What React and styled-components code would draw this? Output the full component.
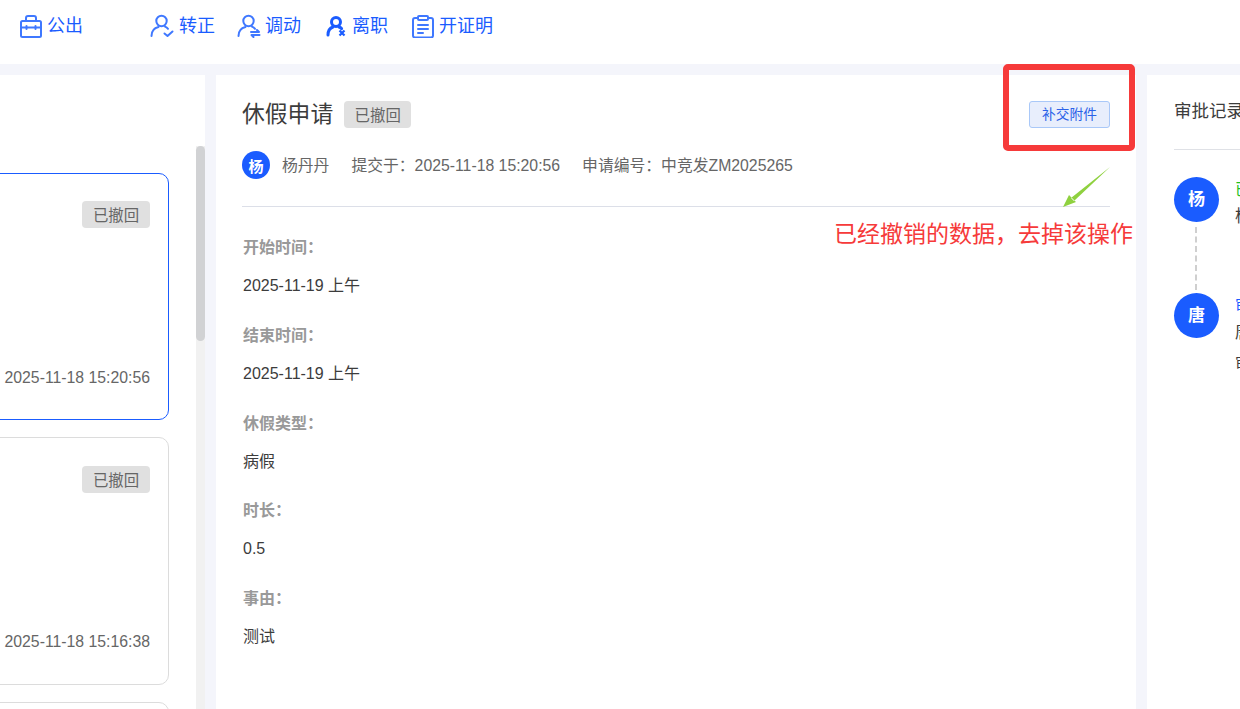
import React from "react";
import styled, { createGlobalStyle } from "styled-components";

const Global = createGlobalStyle`
  html, body { margin: 0; padding: 0; background: #f4f5fb; }
  * { box-sizing: border-box; }
  body { font-family: "Liberation Sans", "Noto Sans CJK SC", sans-serif; }
`;
const Page = styled.div`
  position: relative; width: 1240px; height: 709px; overflow: hidden;
  display: flex; flex-direction: column; background: #f4f5fb;
`;
const Toolbar = styled.div`
  height: 64px; flex: none; background: #fff; display: flex; align-items: flex-start;
  padding: 13px 0 0 20px;
`;
const Tool = styled.div`
  display: flex; align-items: center; height: 26px; gap: ${p => p.$gap}px;
  margin-right: ${p => p.$after}px;
  color: #1a5cff; font-size: 18px; line-height: 26px; white-space: nowrap;
`;
const Columns = styled.div`
  flex: 1; min-height: 0; margin-top: 11px; display: flex; gap: 11px;
`;
const ListPanel = styled.div`
  width: 205px; flex: none; background: #fff; padding-top: 71px; overflow: hidden;
`;
const ListScroll = styled.div`
  height: 100%; display: flex; justify-content: space-between;
`;
const Cards = styled.div`
  width: 169px; flex: none; padding-top: 27px; display: flex; flex-direction: column; gap: 17px;
`;
const Card = styled.div`
  margin-left: -40px; width: 209px; height: ${p => p.$h}px; flex: none; border-radius: 10px;
  border: 1px solid ${p => (p.$active ? "#1a5cff" : "#dcdcdc")}; padding: ${p => p.$pad ?? 27}px 18px 0 0;
  display: flex; flex-direction: column; align-items: flex-end; background: #fff;
`;
const Badge = styled.span`
  display: inline-flex; align-items: center; justify-content: center; width: ${p => p.$w}px; height: 27px;
  padding-bottom: 2px; border-radius: 4px; background: #e0e0e0; color: #666; font-size: 15.4px; flex: none;
`;
const CardDate = styled.div`
  margin-top: ${p => p.$top}px; color: #666; font-size: 15.8px; line-height: 20px; white-space: nowrap;
`;
const Track = styled.div`
  width: 9px; flex: none; background: #f1f1f1;
`;
const Thumb = styled.div`
  height: 195px; background: #d1d2d4; border-radius: 5px;
`;
const Detail = styled.div`
  width: 920px; flex: none; background: #fff; padding: 26px 26px 0;
`;
const TitleRow = styled.div`
  display: flex; align-items: center; height: 27px;
`;
const Title = styled.h1`
  margin: 0 11px 0 0; font-size: 22.8px; font-weight: 400; color: #3c3c3c; line-height: 27px; white-space: nowrap;
`;
const AttachButton = styled.button`
  margin-left: auto; width: 81px; height: 27px; padding: 0 0 3px; border-radius: 3px;
  border: 1px solid #a9c8f8; background: #e8eefc; color: #2b62e8; font: 13.7px "Liberation Sans", "Noto Sans CJK SC", sans-serif;
`;
const MetaRow = styled.div`
  margin-top: 23px; display: flex; align-items: center; height: 28px; color: #666; font-size: 15.8px; white-space: nowrap;
`;
const Avatar = styled.div`
  width: ${p => p.$size}px; height: ${p => p.$size}px; flex: none; border-radius: 50%; background: #1a5cff;
  color: #fff; display: flex; align-items: center; justify-content: center; font-weight: 700;
  font-size: ${p => p.$font}px; padding-bottom: ${p => p.$lift ?? 0}px;
`;
const MetaText = styled.span`
  margin-left: ${p => p.$left}px; padding-bottom: 2px;
`;
const Divider = styled.div`
  height: 1px; background: #dcdfe8; margin-top: 27px; margin-bottom: 27px;
`;
const Field = styled.div`
  padding-left: 1px; height: 87.8px;
`;
const FieldLabel = styled.div`
  font-size: 16px; font-weight: 700; color: #999; line-height: 28px;
`;
const FieldValue = styled.div`
  margin-top: 10px; font-size: 16px; color: #3c3c3c; line-height: 28px;
`;
const Records = styled.div`
  flex: 1; min-width: 0; background: #fff; padding: 24px 0 0 27px; overflow: hidden;
`;
const RecordsTitle = styled.div`
  font-size: 17.5px; color: #3c3c3c; line-height: 24px; white-space: nowrap; padding-bottom: 26px;
  width: 200px; border-bottom: 1px solid #dfe1e6;
`;
const Timeline = styled.div`
  padding-top: 27px; display: flex; flex-direction: column; width: 240px;
`;
const Step = styled.div`
  display: flex; gap: 16px; height: ${p => p.$h}px;
`;
const Rail = styled.div`
  display: flex; flex-direction: column; align-items: center; width: 45px; flex: none;
`;
const Dash = styled.div`
  margin-top: 5px; height: 63px; margin-right: 2px; border-left: 2px dashed #cfcfcf;
`;
const StepText = styled.div`
  white-space: nowrap; padding-top: 3px;
`;
const StepStatus = styled.div`
  color: ${p => p.$color}; font-size: 15.4px; line-height: 20px;
`;
const StepName = styled.div`
  color: #3c3c3c; font-size: 17px; line-height: 24px; margin-top: 5px;
`;
const StepNote = styled.div`
  color: #3c3c3c; font-size: 15.4px; line-height: 20px; margin-top: 9px;
`;
const RedBox = styled.div`
  position: absolute; left: 1003px; top: 64px; width: 132px; height: 87px;
  border: 6px solid #f63a3a; border-radius: 5px; pointer-events: none;
`;
const Note = styled.div`
  position: absolute; left: 834px; top: 219px; color: #f63a3a; font-size: 23px; line-height: 30px; white-space: nowrap;
`;
const ArrowMark = styled.svg`
  position: absolute; left: 1060px; top: 165px;
`;

const stroke = { fill: "none", stroke: "#3f78ff", strokeWidth: 2, strokeLinecap: "round", strokeLinejoin: "round" };

const CaseIcon = () => (
  <svg width="22" height="23" viewBox="0 0 22 23"><g {...stroke}>
    <rect x="1" y="6" width="20" height="16" rx="1.5" />
    <path d="M6 6V3a2 2 0 0 1 2-2h6a2 2 0 0 1 2 2v3M1 12.5h20M6.5 11v3M15.5 11v3" />
  </g></svg>
);
const PersonBase = () => (
  <g {...stroke}>
    <circle cx="11.5" cy="7" r="5.2" />
    <path d="M1.5 22c0-5 3-8 7-9M15 12.6c1.2.5 2.2 1.2 3 2.2" />
  </g>
);
const PersonCheck = () => (
  <svg width="24" height="24" viewBox="0 0 24 24"><PersonBase />
    <path d="M14.5 19.5l3 2.5 5-4.5" {...stroke} /></svg>
);
const PersonSwap = () => (
  <svg width="24" height="24" viewBox="0 0 24 24"><PersonBase />
    <path d="M14 18h8l-2-2M22.5 21h-8l2 2" {...stroke} /></svg>
);
const PersonCross = () => (
  <svg width="20" height="22" viewBox="0 0 20 22"><g fill="none" stroke="#1a5cff" strokeWidth="3" strokeLinecap="round">
    <circle cx="10" cy="7" r="4.5" />
    <path d="M2 20c0-4 2-7 5-8M13 12c1 .4 2 1 2.6 1.6" />
  </g><path d="M13.5 15.5l5 5M18.5 15.5l-5 5" stroke="#1a5cff" strokeWidth="2.2" /></svg>
);
const ClipboardIcon = () => (
  <svg width="22" height="23" viewBox="0 0 22 23"><g {...stroke}>
    <path d="M6 3H3a2 2 0 0 0-2 2v15.5a2 2 0 0 0 2 2h16a2 2 0 0 0 2-2V5a2 2 0 0 0-2-2h-3" />
    <rect x="6" y="1" width="10" height="4" rx="1" />
    <path d="M6 10h10M6 14h10M6 18h5" />
  </g></svg>
);

const fields = [
  ["开始时间：", "2025-11-19 上午"],
  ["结束时间：", "2025-11-19 上午"],
  ["休假类型：", "病假"],
  ["时长：", "0.5"],
  ["事由：", "测试"],
];

export default function App() {
  return (
    <Page>
      <Global />
      <Toolbar>
        <Tool $after={67} $gap={5}><CaseIcon />公出</Tool>
        <Tool $after={22} $gap={5}><PersonCheck />转正</Tool>
        <Tool $after={25} $gap={4}><PersonSwap />调动</Tool>
        <Tool $after={24} $gap={6}><PersonCross />离职</Tool>
        <Tool $after={0} $gap={5}><ClipboardIcon />开证明</Tool>
      </Toolbar>
      <Columns>
        <ListPanel>
          <ListScroll>
            <Cards>
              <Card $active $h={247}><Badge $w={68}>已撤回</Badge><CardDate $top={140}>2025-11-18 15:20:56</CardDate></Card>
              <Card $h={248} $pad={28}><Badge $w={68}>已撤回</Badge><CardDate $top={139}>2025-11-18 15:16:38</CardDate></Card>
              <Card $h={100} />
            </Cards>
            <Track><Thumb /></Track>
          </ListScroll>
        </ListPanel>
        <Detail>
          <TitleRow>
            <Title>休假申请</Title>
            <Badge $w={67}>已撤回</Badge>
            <AttachButton>补交附件</AttachButton>
          </TitleRow>
          <MetaRow>
            <Avatar $size={28} $font={15}>杨</Avatar>
            <MetaText $left={12}>杨丹丹</MetaText>
            <MetaText $left={22}>提交于：2025-11-18 15:20:56</MetaText>
            <MetaText $left={22}>申请编号：中竞发ZM2025265</MetaText>
          </MetaRow>
          <Divider />
          {fields.map(([label, value]) => (
            <Field key={label}>
              <FieldLabel>{label}</FieldLabel>
              <FieldValue>{value}</FieldValue>
            </Field>
          ))}
        </Detail>
        <Records>
          <RecordsTitle>审批记录</RecordsTitle>
          <Timeline>
            <Step $h={116}>
              <Rail><Avatar $size={45} $font={17} $lift={4}>杨</Avatar><Dash /></Rail>
              <StepText>
                <StepStatus $color="#1fc01f">已提交</StepStatus>
                <StepName>杨丹丹</StepName>
              </StepText>
            </Step>
            <Step $h={100}>
              <Rail><Avatar $size={45} $font={17} $lift={4}>唐</Avatar></Rail>
              <StepText>
                <StepStatus $color="#1a5cff">审批中</StepStatus>
                <StepName>唐丽</StepName>
                <StepNote>审批意见</StepNote>
              </StepText>
            </Step>
          </Timeline>
        </Records>
      </Columns>
      <RedBox />
      <ArrowMark width="52" height="44" viewBox="0 0 52 44">
        <path d="M50 2 L11 33 L14 36 Z M3 42 L9 30 L16 37 Z" fill="#8fd13f" />
      </ArrowMark>
      <Note>已经撤销的数据，去掉该操作</Note>
    </Page>
  );
}
